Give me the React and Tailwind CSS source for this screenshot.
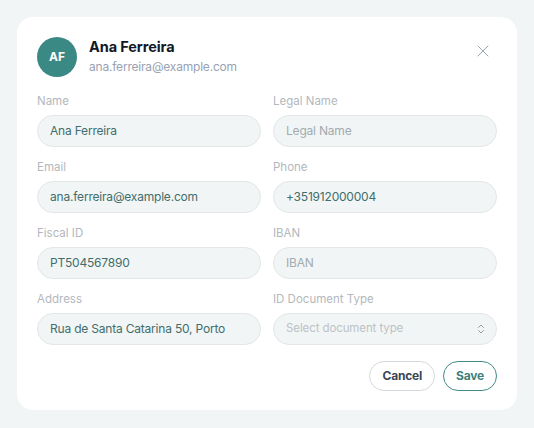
import { X, ChevronsUpDown } from 'lucide-react';

const fields = [
  { label: 'Name', value: 'Ana Ferreira' },
  { label: 'Legal Name', placeholder: 'Legal Name' },
  { label: 'Email', value: 'ana.ferreira@example.com' },
  { label: 'Phone', value: '+351912000004' },
  { label: 'Fiscal ID', value: 'PT504567890' },
  { label: 'IBAN', placeholder: 'IBAN' },
  { label: 'Address', value: 'Rua de Santa Catarina 50, Porto' },
];

function Field({ label, value, placeholder }) {
  return (
    <div className="flex flex-col">
      <label className="text-[11.5px] leading-[16px] text-[#b3b8bd] mb-[6px]">{label}</label>
      <div className="h-[32px] rounded-full bg-[#f2f5f5] border border-[#e3e7e8] px-[12px] flex items-center text-[12px] tracking-[-0.2px] whitespace-nowrap">
        {value ? (
          <span className="text-[#3f6e6c]">{value}</span>
        ) : (
          <span className="text-[#a3abb0]">{placeholder}</span>
        )}
      </div>
    </div>
  );
}

export default function App() {
  return (
    <div className="min-h-screen bg-[#f1f5f5] p-[17px] font-['Inter',sans-serif]">
      <div className="w-[500px] bg-white rounded-[16px] px-[20px] pt-[20px] pb-[19px]">
        {/* Header */}
        <div className="flex items-start">
          <div className="w-[40px] h-[40px] rounded-full bg-[#3a8985] flex items-center justify-center text-white text-[12px] font-bold">
            AF
          </div>
          <div className="ml-[12px] flex-1">
            <div className="text-[14.5px] leading-[18px] font-bold text-[#111827] tracking-[-0.1px] mt-[1px]">Ana Ferreira</div>
            <div className="text-[12px] leading-[16px] text-[#98a2b3] tracking-[-0.2px] mt-[3px]">ana.ferreira@example.com</div>
          </div>
          <button className="mt-[4px] mr-[4px] text-[#8a94a0]">
            <X size={20} strokeWidth={1} />
          </button>
        </div>

        {/* Form */}
        <div className="grid grid-cols-2 gap-x-[12px] gap-y-[12px] mt-[16px]">
          {fields.map((f) => (
            <Field key={f.label} {...f} />
          ))}
          <div className="flex flex-col">
            <label className="text-[11.5px] leading-[16px] text-[#b3b8bd] mb-[6px]">ID Document Type</label>
            <div className="h-[32px] rounded-full bg-[#f2f5f5] border border-[#e3e7e8] pl-[12px] pr-[9px] flex items-center justify-between text-[11.5px] tracking-[-0.1px]">
              <span className="text-[#bcc3c6]">Select document type</span>
              <ChevronsUpDown size={12} className="text-[#8a959c]" strokeWidth={1.8} />
            </div>
          </div>
        </div>

        {/* Actions */}
        <div className="flex justify-end gap-[8px] mt-[16px]">
          <button className="h-[30px] px-[12px] rounded-full border border-[#d4d9de] text-[12px] font-bold text-[#3a4656] tracking-[-0.2px]">
            Cancel
          </button>
          <button className="h-[30px] px-[12px] rounded-full border border-[#3f8a86] text-[12px] font-bold text-[#3f7f7c] tracking-[-0.2px]">
            Save
          </button>
        </div>
      </div>
    </div>
  );
}
